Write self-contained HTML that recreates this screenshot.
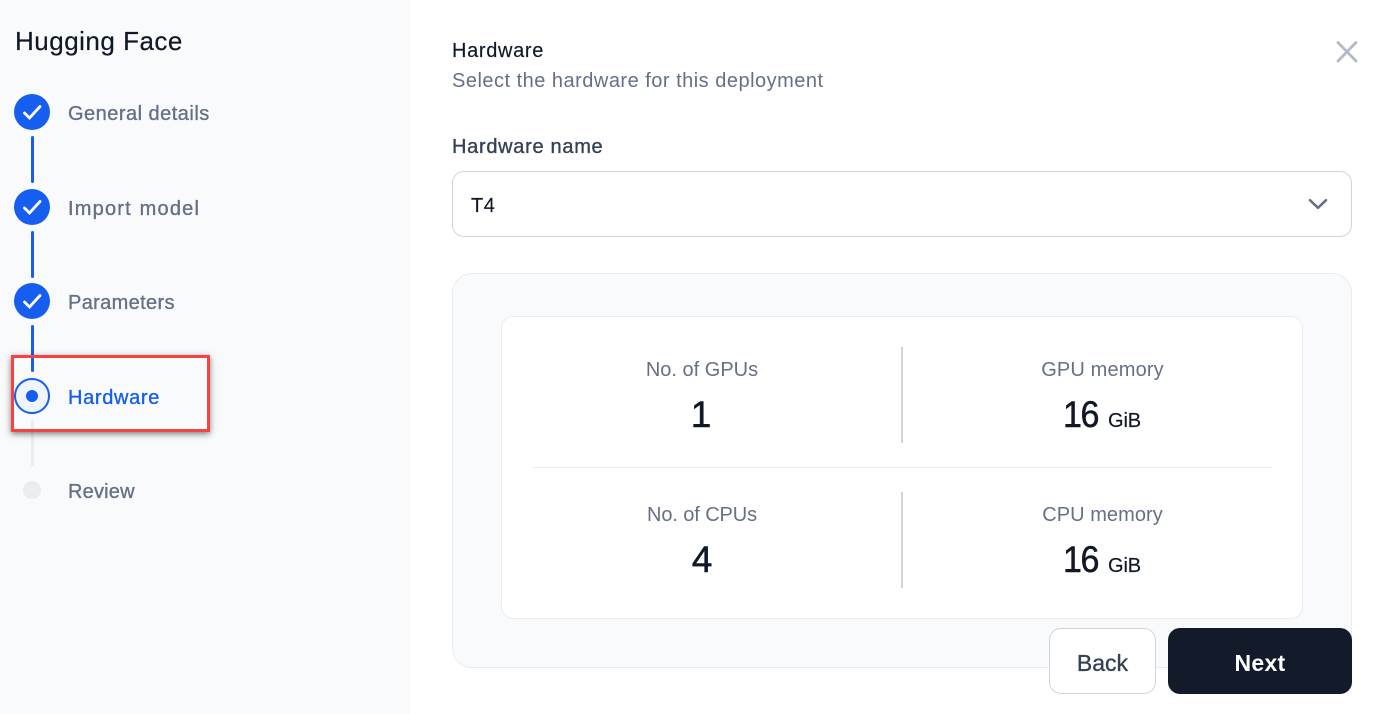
<!DOCTYPE html>
<html><head><meta charset="utf-8">
<style>
html,body{margin:0;padding:0;width:1381px;height:714px;overflow:hidden;background:#fff;font-family:"Liberation Sans",sans-serif}
.a{position:absolute}
.t{position:absolute;white-space:nowrap;line-height:30px;height:30px}
.c{transform:translateX(-50%)}
.m{-webkit-text-stroke:.35px currentColor}
.step{color:#667085;font-size:20px}
.lab{color:#667085;font-size:20px}
.num{color:#101828;font-size:37px;letter-spacing:-1.5px;-webkit-text-stroke:.5px currentColor;transform-origin:0 50%;transform:scaleX(.92)}
.numc{color:#101828;font-size:37px;-webkit-text-stroke:.5px currentColor;transform:translateX(-50%)}
.unit{color:#101828;font-size:20px;letter-spacing:-.1px;-webkit-text-stroke:.15px currentColor}
</style></head><body>
<div class="a" style="left:0;top:0;width:410px;height:714px;background:#f9fafb"></div>
<div class="t" style="left:15px;top:26px;font-size:26px;letter-spacing:.5px;color:#101828;-webkit-text-stroke:.2px #101828">Hugging Face</div>

<div class="a" style="left:31px;top:136px;width:3px;height:47px;background:#155eef;border-radius:2px"></div>
<div class="a" style="left:31px;top:231px;width:3px;height:47px;background:#155eef;border-radius:2px"></div>
<div class="a" style="left:31px;top:325px;width:3px;height:47px;background:#155eef;border-radius:2px"></div>
<div class="a" style="left:31px;top:420px;width:3px;height:46px;background:#eaecf0;border-radius:2px"></div>

<svg class="a" style="left:14px;top:94px" width="36" height="36" viewBox="0 0 36 36"><circle cx="18" cy="18" r="18" fill="#155eef"/><path d="M10.500 19l5 5 10.500-11.500" fill="none" stroke="#fff" stroke-width="2.800" stroke-linecap="round" stroke-linejoin="miter"/></svg>
<svg class="a" style="left:14px;top:189px" width="36" height="36" viewBox="0 0 36 36"><circle cx="18" cy="18" r="18" fill="#155eef"/><path d="M10.500 19l5 5 10.500-11.500" fill="none" stroke="#fff" stroke-width="2.800" stroke-linecap="round" stroke-linejoin="miter"/></svg>
<svg class="a" style="left:14px;top:283px" width="36" height="36" viewBox="0 0 36 36"><circle cx="18" cy="18" r="18" fill="#155eef"/><path d="M10.500 19l5 5 10.500-11.500" fill="none" stroke="#fff" stroke-width="2.800" stroke-linecap="round" stroke-linejoin="miter"/></svg>
<svg class="a" style="left:14px;top:378px" width="36" height="36" viewBox="0 0 36 36"><circle cx="18" cy="18" r="17" fill="#eff4ff" stroke="#155eef" stroke-width="2"/><circle cx="18" cy="18" r="6" fill="#155eef"/></svg>
<div class="a" style="left:23px;top:481px;width:18px;height:18px;border-radius:50%;background:#eaecf0"></div>

<div class="t step m" style="left:68px;top:99px;letter-spacing:.48px">General details</div>
<div class="t step m" style="left:68px;top:194px;letter-spacing:1.200px;word-spacing:1px">Import model</div>
<div class="t step m" style="left:68px;top:288px;letter-spacing:.35px">Parameters</div>
<div class="t step m" style="left:68px;top:383px;letter-spacing:.67px;color:#155eef">Hardware</div>
<div class="t step m" style="left:68px;top:477px;letter-spacing:.2px">Review</div>

<div class="a" style="left:11px;top:355px;width:199px;height:77px;box-sizing:border-box;border:3px solid #f44343;box-shadow:0 2px 6px rgba(0,0,0,.5)"></div>

<div class="t m" style="left:452px;top:36px;font-size:20px;letter-spacing:.67px;color:#101828;-webkit-text-stroke-width:.15px">Hardware</div>
<div class="t" style="left:452px;top:66px;font-size:20px;letter-spacing:.49px;color:#667085">Select the hardware for this deployment</div>
<svg class="a" style="left:1334px;top:39px" width="26" height="26" viewBox="0 0 26 26"><path d="M4 3.500l18 18.500M22 3.500l-18 18.500" stroke="#b3bac5" stroke-width="2.800" stroke-linecap="round"/></svg>

<div class="t m" style="left:452px;top:132px;font-size:20px;letter-spacing:.7px;color:#344054">Hardware name</div>
<div class="a" style="left:452px;top:171px;width:900px;height:66px;box-sizing:border-box;border:1px solid #d0d5dd;border-radius:12px;background:#fff"></div>
<div class="t" style="left:471px;top:191px;font-size:20px;letter-spacing:.5px;color:#101828;-webkit-text-stroke:.15px #101828">T4</div>
<svg class="a" style="left:1306px;top:192px" width="24" height="24" viewBox="0 0 24 24"><path d="M4 8.200l8 7.600 8-7.600" fill="none" stroke="#667085" stroke-width="2.600" stroke-linecap="round" stroke-linejoin="round"/></svg>

<div class="a" style="left:452px;top:273px;width:900px;height:395px;box-sizing:border-box;border:1px solid #eaecf0;border-radius:20px;background:#f9fafb"></div>
<div class="a" style="left:501px;top:316px;width:802px;height:303px;box-sizing:border-box;border:1px solid #eaecf0;border-radius:12px;background:#fff"></div>
<div class="a" style="left:901px;top:347px;width:2px;height:96px;background:#d0d5dd"></div>
<div class="a" style="left:901px;top:492px;width:2px;height:96px;background:#d0d5dd"></div>
<div class="a" style="left:532px;top:467px;width:740px;height:1px;background:#eaecf0"></div>

<div class="t lab c" style="left:702px;top:355px">No. of GPUs</div>
<div class="t lab c" style="left:1102.500px;top:355px;letter-spacing:.15px">GPU memory</div>
<div class="t lab c" style="left:702px;top:500px;letter-spacing:-.1px">No. of CPUs</div>
<div class="t lab c" style="left:1102.500px;top:500px;letter-spacing:.05px">CPU memory</div>
<div class="t numc" style="left:701px;top:400px">1</div>
<div class="t num" style="left:1063px;top:400px">16</div>
<div class="t unit" style="left:1108px;top:406px">GiB</div>
<div class="t numc" style="left:702px;top:545px">4</div>
<div class="t num" style="left:1063px;top:545px">16</div>
<div class="t unit" style="left:1108px;top:551px">GiB</div>

<div class="a" style="left:1049px;top:628px;width:107px;height:66px;box-sizing:border-box;border:1px solid #d0d5dd;border-radius:12px;background:#fff"></div>
<div class="t c m" style="left:1102.500px;top:648px;font-size:23px;color:#344054">Back</div>
<div class="a" style="left:1168px;top:628px;width:184px;height:66px;border-radius:12px;background:#131a29"></div>
<div class="t c" style="left:1260px;top:648px;font-size:23px;font-weight:bold;letter-spacing:.3px;color:#fff">Next</div>
</body></html>
